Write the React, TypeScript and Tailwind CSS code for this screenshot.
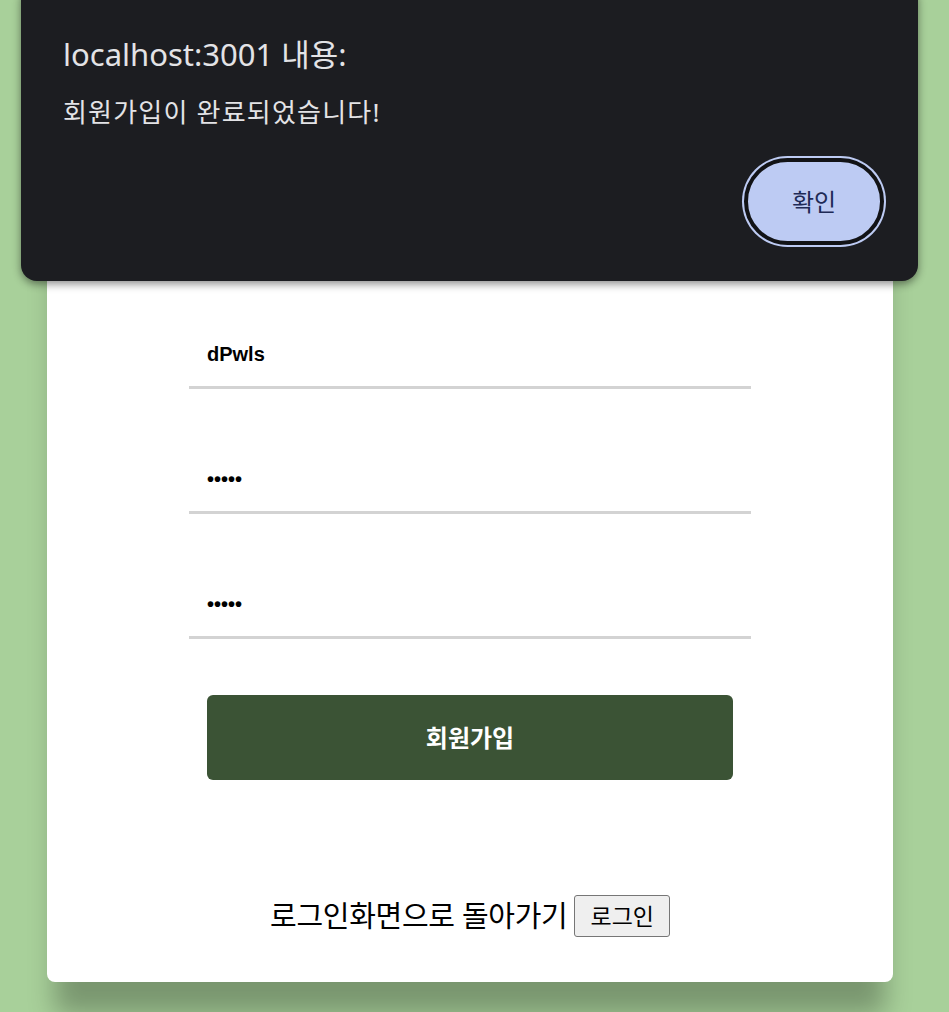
import React from 'react';

const kr = "font-['Noto_Sans','Noto_Sans_CJK_KR',sans-serif]";

const fields = [
  { value: 'dPwls' },
  { value: '•••••' },
  { value: '•••••' },
];

const AlertDialog = () => {
  return (
    <div className={`absolute left-[21px] top-[-16px] w-[897px] rounded-[16px] bg-[#1c1d21] pl-[42px] pr-[34px] pt-[52px] pb-[36px] shadow-[0_3px_8px_rgba(0,0,0,0.45)] ${kr}`}>
      <p className="text-[31px] leading-[36px] text-[#e3e3e6]">localhost:3001 내용:</p>
      <p className="mt-[25px] text-[26px] leading-[30px] tracking-[1.2px] text-[#e3e3e6]">회원가입이 완료되었습니다!</p>
      <div className="mt-[31px] flex justify-end">
        <button className="h-[87px] w-[140px] rounded-full border-[4px] border-[#121316] bg-[#bdcbf3] text-[24px] text-[#1e2a56] ring-[2px] ring-[#bdcbf3]">
          확인
        </button>
      </div>
    </div>
  );
};

const SignupCard = () => {
  return (
    <div className="ml-[47px] w-[846px] rounded-b-[8px] bg-white pt-[322px] pb-[45px] shadow-[0_40px_25px_-8px_rgba(0,0,0,0.28)]">
      <div className="mx-auto flex w-[562px] flex-col gap-[58px]">
        {fields.map((f, i) => (
          <div
            key={i}
            className="flex h-[67px] items-center border-b-[3px] border-[#d3d3d3] pl-[18px] font-['Liberation_Sans',Arial,sans-serif] text-[20px] font-bold text-black"
          >
            {f.value}
          </div>
        ))}
      </div>
      <div className="mt-[56px] flex justify-center">
        <button className={`h-[85px] w-[526px] rounded-[6px] bg-[#3b5335] text-[24px] font-bold text-white ${kr}`}>
          회원가입
        </button>
      </div>
      <div className={`mt-[115px] flex items-center justify-center gap-[7px] ${kr}`}>
        <span className="text-[29px] leading-[34px] tracking-[-0.3px] text-black">로그인화면으로 돌아가기</span>
        <button className="h-[42px] rounded-[3px] border border-[#767676] bg-[#efefef] px-[15px] text-[23px] text-black">
          로그인
        </button>
      </div>
    </div>
  );
};

export default function App() {
  return (
    <div className="relative min-h-screen overflow-hidden bg-[#a8d09a]">
      <SignupCard />
      <AlertDialog />
    </div>
  );
}
